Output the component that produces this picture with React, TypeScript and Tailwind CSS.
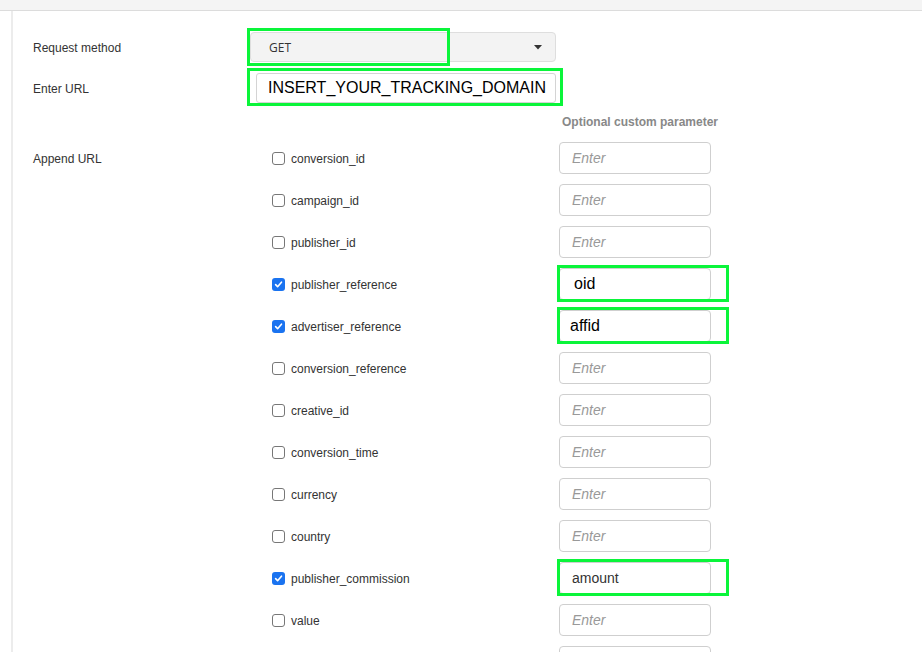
import React from 'react'

interface IParamRow {
    name: string
    checked?: boolean
    value?: string
    highlight?: boolean
    valueClass?: string
    hidden?: boolean
}

const rows: IParamRow[] = [
    { name: 'conversion_id' },
    { name: 'campaign_id' },
    { name: 'publisher_id' },
    { name: 'publisher_reference', checked: true, value: 'oid', highlight: true, valueClass: 'pl-[14px] text-[16px] text-black' },
    { name: 'advertiser_reference', checked: true, value: 'affid', highlight: true, valueClass: 'pl-[10px] text-[16px] text-black' },
    { name: 'conversion_reference' },
    { name: 'creative_id' },
    { name: 'conversion_time' },
    { name: 'currency' },
    { name: 'country' },
    { name: 'publisher_commission', checked: true, value: 'amount', highlight: true, valueClass: 'pl-[12px] text-[14px] text-[#333]' },
    { name: 'value' },
    // only the top edge of this one shows at the bottom of the page
    { name: 'advertiser_commission', hidden: true },
]

const Checkbox = ({ checked }: { checked?: boolean }) =>
    checked ? (
        <span className="w-[13px] h-[13px] rounded-[3px] bg-[#1a73f0] flex items-center justify-center shrink-0">
            <svg width="9" height="9" viewBox="0 0 10 10" fill="none">
                <path d="M1.8 5.2 L4 7.4 L8.3 2.4" stroke="white" strokeWidth="1.8" strokeLinecap="round" strokeLinejoin="round" />
            </svg>
        </span>
    ) : (
        <span className="w-[13px] h-[13px] rounded-[3px] border border-[#777] bg-white shrink-0" />
    )

// green marker frames drawn over the screenshot fields
const Highlight = ({ className }: { className: string }) => (
    <div className={`absolute border-[3px] border-[#0af53a] pointer-events-none ${className}`} />
)

const ParamRow = ({ row }: { row: IParamRow }) => (
    <div className="flex items-center h-[32px] mb-[10px]">
        <div className="w-[309px] flex items-center pl-[22px] gap-[6px]">
            {!row.hidden && (
                <>
                    <Checkbox checked={row.checked} />
                    <span className="pt-[2px] text-[12px] text-[#333]">{row.name}</span>
                </>
            )}
        </div>
        <div className="relative">
            <div className="w-[152px] h-[32px] rounded-[4px] border border-[#cfcfcf] bg-white flex items-center">
                {row.hidden ? null : row.value ? (
                    <span className={row.valueClass}>{row.value}</span>
                ) : (
                    <span className="pl-[12px] text-[14px] italic text-[#999]">Enter</span>
                )}
            </div>
            {row.highlight && <Highlight className="-left-[2px] -top-[3px] w-[172px] h-[37px]" />}
        </div>
    </div>
)

export default function App() {
    return (
        <div className="w-[922px] h-[652px] overflow-hidden bg-white font-['Liberation_Sans',Arial,sans-serif]">
            <div className="h-[11px] bg-[#f4f4f4] border-b border-[#dcdcdc]" />
            <div className="flex h-full">
                <div className="w-[11px] shrink-0" />
                <div className="flex-1 border-l-2 border-[#ececec] pl-[20px]">
                    <div className="flex items-center h-[30px] mt-[21px]">
                        <div className="w-[217px] pt-[2px] text-[12px] text-[#333]">Request method</div>
                        <div className="relative">
                            <div className="w-[306px] h-[30px] rounded-[4px] border border-[#dedede] bg-[#f3f3f3] flex items-center justify-between pl-[18px] pr-[13px]">
                                <span className="pt-[1px] text-[12px] text-[#333] font-['Open_Sans',sans-serif]">GET</span>
                                <svg width="8" height="5" viewBox="0 0 8 5">
                                    <path d="M0 0 H8 L4 4.5 Z" fill="#333" />
                                </svg>
                            </div>
                            <Highlight className="-left-[3px] -top-[4px] w-[203px] h-[38px]" />
                        </div>
                    </div>
                    <div className="flex items-center h-[30px] mt-[11px]">
                        <div className="w-[217px] pt-[2px] text-[12px] text-[#333]">Enter URL</div>
                        <div className="relative ml-[6px]">
                            <div className="w-[300px] h-[30px] rounded-[3px] border border-[#d4d4d4] bg-white flex items-center pl-[11px] overflow-hidden whitespace-nowrap">
                                <span className="text-[16px] text-black">INSERT_YOUR_TRACKING_DOMAIN</span>
                            </div>
                            <Highlight className="-left-[9px] -top-[5px] w-[316px] h-[38px]" />
                        </div>
                    </div>
                    <div className="mt-[12px] ml-[529px] text-[12px] leading-[14px] font-bold text-[#888]">
                        Optional custom parameter
                    </div>
                    <div className="flex mt-[13px]">
                        <div className="w-[217px] h-[32px] pt-[2px] flex items-center text-[12px] text-[#333]">Append URL</div>
                        <div>
                            {rows.map((row) => (
                                <ParamRow key={row.name} row={row} />
                            ))}
                        </div>
                    </div>
                </div>
            </div>
        </div>
    )
}
